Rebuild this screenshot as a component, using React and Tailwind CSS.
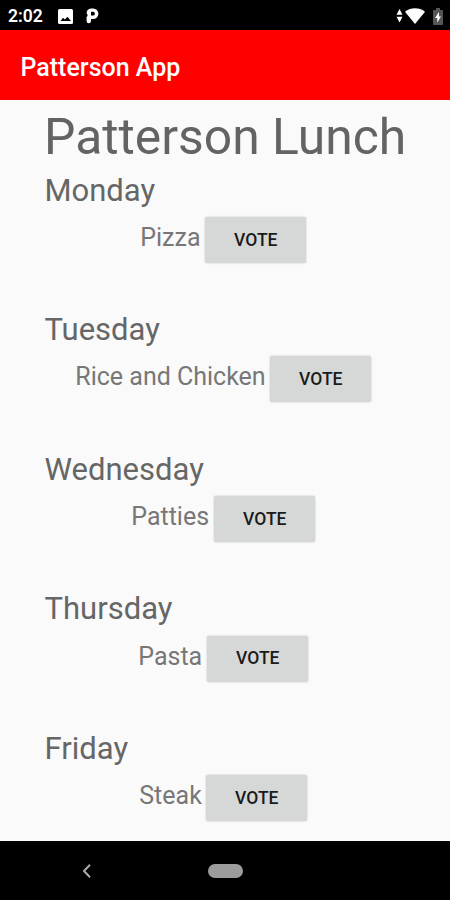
const MENU = [
  { day: "Monday", meal: "Pizza", mealW: "w-[60px]" },
  { day: "Tuesday", meal: "Rice and Chicken", mealW: "w-[190px]" },
  { day: "Wednesday", meal: "Patties", mealW: "w-[78px]" },
  { day: "Thursday", meal: "Pasta", mealW: "w-[64px]" },
  { day: "Friday", meal: "Steak", mealW: "w-[62px]" },
];

function StatusBar() {
  return (
    <div className="flex h-[30px] shrink-0 items-center bg-black pt-[2px] pr-[7px] pl-[8px] text-white">
      <span className="w-[35px] pt-[1px] text-[17.5px] leading-none font-semibold whitespace-nowrap">2:02</span>
      <svg className="ml-[15px]" width="15" height="15" viewBox="0 0 15 15">
        <path
          fillRule="evenodd"
          fill="#fff"
          d="M1.5 0h12A1.5 1.5 0 0 1 15 1.5v12a1.5 1.5 0 0 1-1.5 1.5h-12A1.5 1.5 0 0 1 0 13.5v-12A1.5 1.5 0 0 1 1.5 0ZM2.5 12h10.500L9.500 7.800 6.800 10.500 5 8.800Z"
        />
      </svg>
      <svg className="ml-[13px]" width="13" height="16" viewBox="0 0 13 16">
        <path
          fillRule="evenodd"
          fill="#fff"
          d="M5 .5H7.200a5.200 5.200 0 0 1 0 10.400H5V13a2.200 2.200 0 0 1-4.400 0V9L1.500 8V6.500L.6 5.500A5 5 0 0 1 5 .5ZM5 3.800V7.600H7a1.900 1.900 0 0 0 0-3.800Z"
        />
      </svg>
      <svg className="ml-auto" width="7" height="14" viewBox="0 0 7 14">
        <path fill="#fff" d="M3.5 0 6.500 5.700H.5ZM3.500 13.500.5 7.800H6.500Z" />
      </svg>
      <svg className="ml-[2px]" width="20" height="16" viewBox="0 0 20 16">
        <path fill="#fff" d="M0 3.700C5.500-.8 14.500-.8 20 3.700L10 16Z" />
      </svg>
      <svg className="ml-[8px]" width="10" height="17" viewBox="0 0 10 17">
        <path fill="#555" d="M3 0h4v2h2.200q.8 0 .8.800v13.400q0 .8-.8.800H.8q-.8 0-.8-.8V2.800Q0 2 .8 2H3Z" />
        <path fill="#fff" d="M6 4 2 10h2.300v4.500L8 8.500H6Z" />
      </svg>
    </div>
  );
}

function Meal({ day, meal, mealW }) {
  return (
    <section className="h-[139.6px] shrink-0">
      <h2 className="pt-[0.6px] pl-[44.5px] text-[31px] leading-[40px] font-normal whitespace-nowrap text-[#666]">
        {day}
      </h2>
      <div className="mt-[6.2px] flex justify-center gap-[5px] pr-[3.5px]">
        <span className={`block text-[25px] leading-[42px] whitespace-nowrap text-[#777] ${mealW}`}>{meal}</span>
        <button className="h-[46px] w-[101px] rounded-[2px] bg-[#d6d8d7] text-[17.5px] font-medium text-[#1a1a1a] shadow-[0_0_2px_rgba(0,0,0,0.25)]">
          VOTE
        </button>
      </div>
    </section>
  );
}

export default function App() {
  return (
    <div className="flex h-[900px] w-[450px] flex-col overflow-hidden bg-[#fafafa] font-[Roboto,sans-serif]">
      <StatusBar />
      <header className="flex h-[70px] shrink-0 items-center bg-[#ff0000] pt-[5px] pl-[20.5px] text-[25px] font-medium text-white">
        Patterson App
      </header>
      <main className="flex h-[741px] shrink-0 flex-col overflow-hidden">
        <h1 className="h-[70px] shrink-0 pl-[44px] text-[49.8px] leading-[74px] whitespace-nowrap text-[#636363]">
          Patterson Lunch
        </h1>
        {MENU.map((item) => (
          <Meal key={item.day} {...item} />
        ))}
      </main>
      <nav className="flex h-[59px] shrink-0 items-center bg-black pl-[82px]">
        <svg width="9" height="14" viewBox="0 0 9 14">
          <path d="M8 .8 2 7l6 6.200" fill="none" stroke="#aaa" strokeWidth="2" />
        </svg>
        <div className="ml-[117px] h-[14px] w-[35px] rounded-full bg-[#9c9c9c]" />
      </nav>
    </div>
  );
}
